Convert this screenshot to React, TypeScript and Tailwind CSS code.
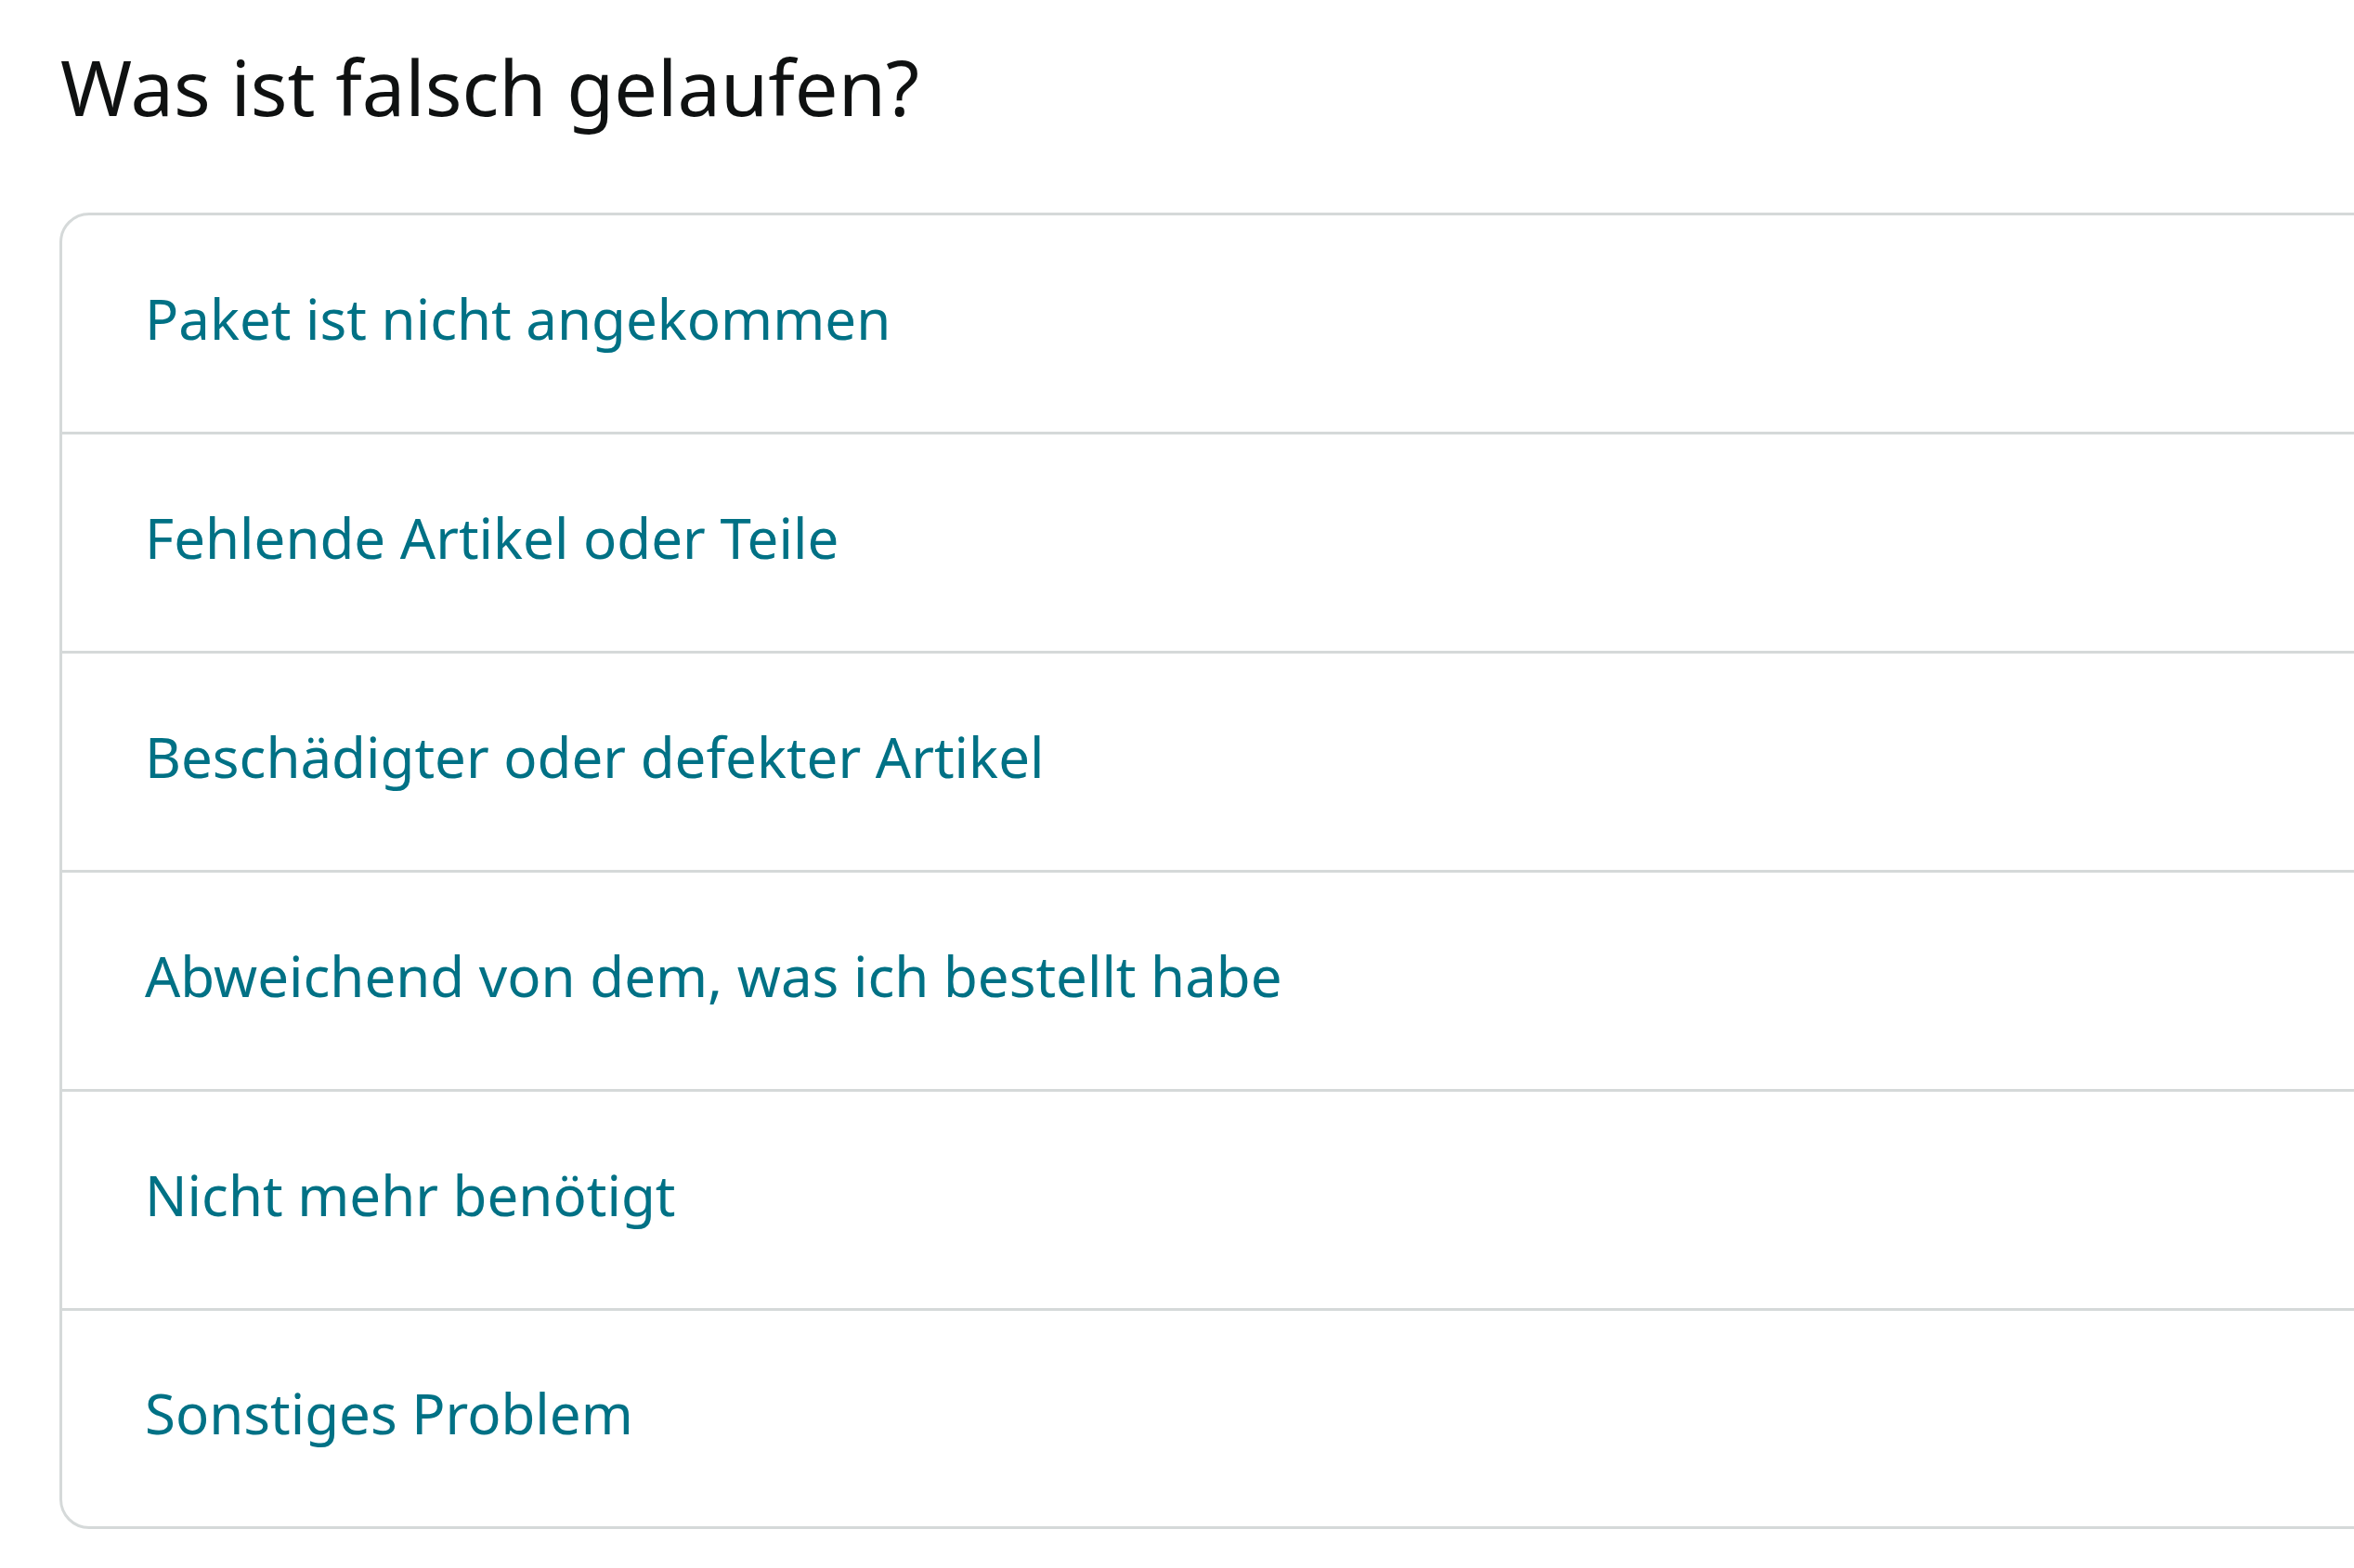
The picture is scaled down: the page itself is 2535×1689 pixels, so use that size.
const reasons = [
  "Paket ist nicht angekommen",
  "Fehlende Artikel oder Teile",
  "Beschädigter oder defekter Artikel",
  "Abweichend von dem, was ich bestellt habe",
  "Nicht mehr benötigt",
  "Sonstiges Problem",
];

const App = () => {
  return (
    <div className="min-h-screen bg-white pl-[64px] font-['Noto_Sans',sans-serif]">
      <h1 className="pt-[33px] pl-[1px] text-[83px] leading-[120px] font-normal text-[#0f1111]">
        Was ist falsch gelaufen?
      </h1>

      <div className="mt-[76px] w-[2520px] rounded-[32px] border-[3px] border-[#d5d9d9]">
        {reasons.map((reason, i) => (
          <div
            key={reason}
            className={
              i < reasons.length - 1
                ? "flex h-[236px] items-center border-b-[3px] border-[#d5d9d9] pb-[12px] pl-[89px]"
                : "flex h-[232px] items-center pb-[12px] pl-[89px]"
            }
          >
            <span className="text-[60px] text-[#007185]">{reason}</span>
          </div>
        ))}
      </div>
    </div>
  );
};

export default App;
